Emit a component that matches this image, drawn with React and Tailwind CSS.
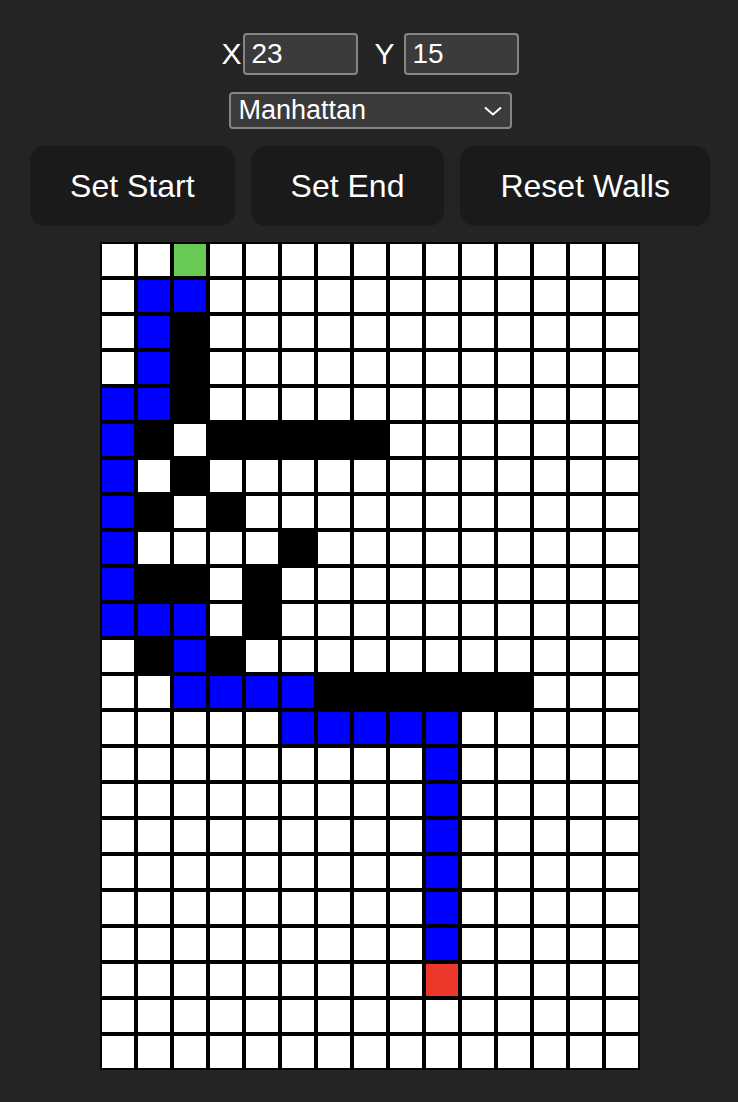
import React, { useState } from "react";

const ROWS = 23;
const COLS = 15;

// cell codes: 0 empty, 1 wall, 2 path, 3 start, 4 end
const WALLS = [
  [2, 2], [3, 2], [4, 2],
  [5, 1], [5, 3], [5, 4], [5, 5], [5, 6], [5, 7],
  [6, 2],
  [7, 1], [7, 3],
  [8, 5],
  [9, 1], [9, 2], [9, 4],
  [10, 4],
  [11, 1], [11, 3],
  [12, 6], [12, 7], [12, 8], [12, 9], [12, 10], [12, 11],
];

const PATH = [
  [1, 1], [1, 2],
  [2, 1], [3, 1], [4, 1], [4, 0],
  [5, 0], [6, 0], [7, 0], [8, 0], [9, 0], [10, 0],
  [10, 1], [10, 2], [11, 2],
  [12, 2], [12, 3], [12, 4], [12, 5],
  [13, 5], [13, 6], [13, 7], [13, 8], [13, 9],
  [14, 9], [15, 9], [16, 9], [17, 9], [18, 9], [19, 9],
];

function buildGrid() {
  const g = Array.from({ length: ROWS }, () => Array(COLS).fill(0));
  WALLS.forEach(([r, c]) => (g[r][c] = 1));
  PATH.forEach(([r, c]) => (g[r][c] = 2));
  g[0][2] = 3;
  g[20][9] = 4;
  return g;
}

const cellColor = {
  0: "bg-white",
  1: "bg-black",
  2: "bg-[#0000ff]",
  3: "bg-[#67cb53]",
  4: "bg-[#ec3828]",
};

export default function App() {
  const [x, setX] = useState("23");
  const [y, setY] = useState("15");
  const [mode, setMode] = useState("manhattan");
  const [grid] = useState(buildGrid);

  return (
    <div
      className="flex min-h-screen flex-col items-center bg-[#242424] pl-[2px] pt-[33px] pb-8 text-white"
      style={{ fontFamily: '"Liberation Sans", Arial, sans-serif' }}
    >
      {/* Size inputs */}
      <div className="flex h-[42px] items-center text-[30px] leading-none">
        <span>X</span>
        <input
          value={x}
          onChange={(e) => setX(e.target.value)}
          className="ml-[1px] h-[42px] w-[115px] rounded-[4px] border-2 border-[#858585] bg-[#3b3b3b] px-[7px] text-[28px] text-white outline-none"
        />
        <span className="ml-[17px]">Y</span>
        <input
          value={y}
          onChange={(e) => setY(e.target.value)}
          className="ml-[9px] h-[42px] w-[115px] rounded-[4px] border-2 border-[#858585] bg-[#3b3b3b] px-[7px] text-[28px] text-white outline-none"
        />
      </div>

      {/* Heuristic */}
      <div className="relative mt-[17px]">
        <select
          value={mode}
          onChange={(e) => setMode(e.target.value)}
          className="h-[37px] w-[283px] appearance-none rounded-[4px] border-2 border-[#858585] bg-[#3b3b3b] pl-[8px] text-[27px] leading-none text-white outline-none"
        >
          <option value="manhattan">Manhattan</option>
          <option value="euclidean">Euclidean</option>
          <option value="chebyshev">Chebyshev</option>
        </select>
        <svg
          className="pointer-events-none absolute right-[10px] top-[14px]"
          width="18"
          height="10"
          viewBox="0 0 18 10"
          fill="none"
        >
          <path d="M1 1.5l8 7 8-7" stroke="white" strokeWidth="2" />
        </svg>
      </div>

      {/* Actions */}
      <div className="mt-[17px] flex gap-4">
        {["Set Start", "Set End", "Reset Walls"].map((label) => (
          <button
            key={label}
            className="h-[80px] rounded-[15px] bg-[#1a1a1a] px-[40px] text-[32px] leading-none text-white"
          >
            {label}
          </button>
        ))}
      </div>

      {/* Board */}
      <div className="mt-4 grid grid-cols-[repeat(15,36px)]">
        {grid.map((row, r) =>
          row.map((v, c) => (
            <div
              key={r + "-" + c}
              className={"h-9 w-9 border-2 border-black " + cellColor[v]}
            />
          ))
        )}
      </div>
    </div>
  );
}
